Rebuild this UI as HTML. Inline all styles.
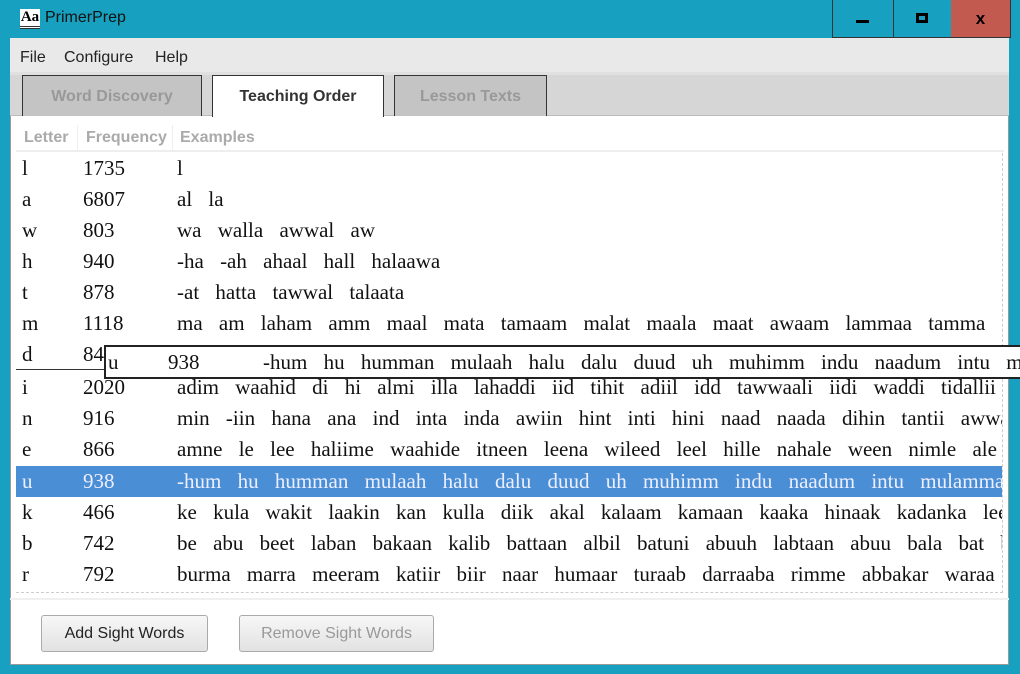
<!DOCTYPE html>
<html><head><meta charset="utf-8"><style>
*{margin:0;padding:0;box-sizing:border-box}
body{width:1020px;height:674px;background:#17a0bf;position:relative;overflow:hidden;font-family:"Liberation Sans",sans-serif}
.abs{position:absolute}
.tb{top:0;height:38px;border:1px solid #333;border-top:none}
.win{left:10px;top:38px;width:999px;height:627px;background:#fff;border:1px solid #999}
.menu{left:10px;top:38px;width:999px;height:34px;background:#e9e9e9;font-size:16px;color:#222}
.menu span{position:absolute;top:11px}
.strip{left:10px;top:72px;width:999px;height:44px;background:#d6d6d6;border-top:3px solid #e0e0e0;border-bottom:1px solid #bbb}
.tab{top:75px;height:41px;border:1px solid #333;border-bottom:none;background:#c4c4c4;color:#999;font-weight:bold;font-size:16px;text-align:center;line-height:42px}
.hdr{top:125px;height:26px;font-size:16px;font-weight:bold;color:#aaa;line-height:26px}
.row{left:16px;width:986px;height:31px;font-family:"Liberation Serif",serif;font-size:21px;color:#111;line-height:31px;white-space:nowrap;overflow:hidden}
.row b{font-weight:normal;position:absolute}
.c1{left:6px}.c2{left:67px}.c3{left:161px;word-spacing:11px}
.sel{background:#4a8fd6;color:#eef}
.btn{top:615px;height:37px;border:1px solid #aaa;border-radius:3px;font-size:16px;line-height:35px;text-align:center;background:linear-gradient(#f7f7f7,#e2e2e2)}
</style></head><body>
<div class="abs" style="left:20px;top:9px;width:20px;height:20px;background:#fff;font-family:'Liberation Serif',serif;font-weight:bold;font-size:15px;line-height:16px;border-bottom:3px double #333;text-align:center">Aa</div>
<div class="abs" style="left:45px;top:9px;font-size:16px;color:#111">PrimerPrep</div>
<div class="abs tb" style="left:832px;width:62px"><div class="abs" style="left:23px;top:20px;width:13px;height:3px;background:#000"></div></div>
<div class="abs tb" style="left:893px;width:59px;border-left:none"><div class="abs" style="left:23px;top:13px;width:12px;height:10px;border:3px solid #000"></div></div>
<div class="abs tb" style="left:951px;width:60px;background:#c35a50;border-left:none;font-weight:bold;font-size:17px;text-align:center;line-height:38px">x</div>
<div class="abs win"></div>
<div class="abs menu"><span style="left:10px">File</span><span style="left:54px">Configure</span><span style="left:145px">Help</span></div>
<div class="abs strip"></div>
<div class="abs tab" style="left:22px;width:180px">Word Discovery</div>
<div class="abs tab" style="left:212px;width:172px;background:#fff;color:#333;height:42px">Teaching Order</div>
<div class="abs tab" style="left:394px;width:153px">Lesson Texts</div>
<div class="abs" style="left:16px;top:124px;width:988px;height:28px;border-bottom:2px solid #eee"></div>
<div class="abs hdr" style="left:24px">Letter</div>
<div class="abs" style="left:77px;top:125px;width:1px;height:26px;background:#eee"></div>
<div class="abs hdr" style="left:86px">Frequency</div>
<div class="abs" style="left:172px;top:125px;width:1px;height:26px;background:#eee"></div>
<div class="abs hdr" style="left:180px">Examples</div>
<div class="abs" style="left:1002px;top:153px;height:440px;border-left:1px dashed #ccc"></div>
<div class="abs" style="left:16px;top:592px;width:987px;border-top:1px dashed #ccc"></div>
<div class="abs" style="left:10px;top:598px;width:999px;border-top:2px solid #f0f0f0"></div>

<div class="abs row" style="top:153px"><b class="c1">l</b><b class="c2">1735</b><b class="c3">l</b></div>
<div class="abs row" style="top:184px"><b class="c1">a</b><b class="c2">6807</b><b class="c3">al la</b></div>
<div class="abs row" style="top:215px"><b class="c1">w</b><b class="c2">803</b><b class="c3">wa walla awwal aw</b></div>
<div class="abs row" style="top:246px"><b class="c1">h</b><b class="c2">940</b><b class="c3">-ha -ah ahaal hall halaawa</b></div>
<div class="abs row" style="top:277px"><b class="c1">t</b><b class="c2">878</b><b class="c3">-at hatta tawwal talaata</b></div>
<div class="abs row" style="top:308px"><b class="c1">m</b><b class="c2">1118</b><b class="c3">ma am laham amm maal mata tamaam malat maala maat awaam lammaa tamma ma</b></div>
<div class="abs row" style="top:339px;border-bottom:1px solid #333"><b class="c1">d</b><b class="c2">840</b></div>
<div class="abs row" style="top:372px"><b class="c1">i</b><b class="c2">2020</b><b class="c3">adim waahid di hi almi illa lahaddi iid tihit adiil idd tawwaali iidi waddi tidallii a</b></div>
<div class="abs row" style="top:403px"><b class="c1">n</b><b class="c2">916</b><b class="c3">min -iin hana ana ind inta inda awiin hint inti hini naad naada dihin tantii awwala</b></div>
<div class="abs row" style="top:434px"><b class="c1">e</b><b class="c2">866</b><b class="c3">amne le lee haliime waahide itneen leena wileed leel hille nahale ween nimle ale e</b></div>
<div class="abs row sel" style="top:466px"><b class="c1">u</b><b class="c2">938</b><b class="c3">-hum hu humman mulaah halu dalu duud uh muhimm indu naadum intu mulamma</b></div>
<div class="abs row" style="top:497px"><b class="c1">k</b><b class="c2">466</b><b class="c3">ke kula wakit laakin kan kulla diik akal kalaam kamaan kaaka hinaak kadanka lee</b></div>
<div class="abs row" style="top:528px"><b class="c1">b</b><b class="c2">742</b><b class="c3">be abu beet laban bakaan kalib battaan albil batuni abuuh labtaan abuu bala bat b</b></div>
<div class="abs row" style="top:559px"><b class="c1">r</b><b class="c2">792</b><b class="c3">burma marra meeram katiir biir naar humaar turaab darraaba rimme abbakar waraa</b></div>

<div class="abs" style="left:104px;top:345px;width:930px;height:34px;background:#fff;border:2px solid #222;font-family:'Liberation Serif',serif;font-size:21px;line-height:30px;white-space:nowrap;overflow:hidden;color:#111">
<span class="abs" style="left:2px">u</span><span class="abs" style="left:62px">938</span><span class="abs" style="left:157px;word-spacing:11px">-hum hu humman mulaah halu dalu duud uh muhimm indu naadum intu mulamma</span></div>

<div class="abs btn" style="left:41px;width:167px;color:#222">Add Sight Words</div>
<div class="abs btn" style="left:239px;width:195px;color:#999">Remove Sight Words</div>
</body></html>
